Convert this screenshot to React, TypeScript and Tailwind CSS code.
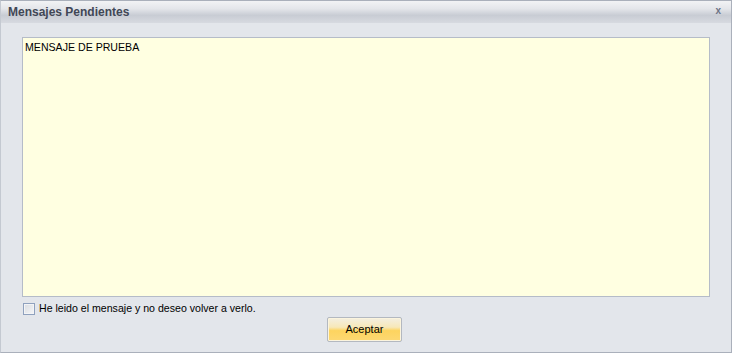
export default function App() {
  return (
    <div className="w-[732px] h-[353px] bg-[#e3e6eb] border border-[#aab0bb] border-l-[#c4c9d1] flex flex-col font-['Liberation_Sans',Arial,sans-serif] overflow-hidden">
      {/* Title bar */}
      <div className="h-[22px] shrink-0 flex items-center justify-between pl-[7px] pr-[10px] bg-[linear-gradient(to_bottom,#f2f3f5_0%,#e4e6ea_35%,#c8ccd4_65%,#d7dae0_100%)]">
        <span className="text-[12px] font-bold text-[#414756] leading-none">Mensajes Pendientes</span>
        <span className="text-[10px] font-bold text-[#6d7386] leading-none -mt-[2px]">x</span>
      </div>

      <div className="flex flex-col flex-1 pt-[14px] pl-[21px] pr-[21px]">
        <div className="h-[260px] bg-[#ffffe1] border border-[#b5bcc8] px-[2px] py-[3px]">
          <p className="text-[10.6px] text-black leading-[13px]">MENSAJE DE PRUEBA</p>
        </div>

        <label className="flex items-center gap-[4px] mt-[5px] h-[13px] ml-px">
          <span className="w-[12px] h-[12px] border border-[#8fa1be] bg-[linear-gradient(135deg,#d9dce1,#f5f6f8)] shadow-[inset_0_0_0_1px_#f3f4f6]" />
          <span className="text-[10.6px] text-black leading-none">He leido el mensaje y no deseo volver a verlo.</span>
        </label>

        <div className="flex justify-center mt-[2px]">
          <button className="w-[75px] h-[25px] ml-[-3px] rounded-[2px] border border-[#b3b8c0] text-[11px] text-black bg-[linear-gradient(to_bottom,#f4efe1_0%,#f7e8b9_40%,#fdd45f_55%,#fdd873_100%)] shadow-[inset_0_0_0_1px_#fbf4de]">
            Aceptar
          </button>
        </div>
      </div>
    </div>
  );
}
